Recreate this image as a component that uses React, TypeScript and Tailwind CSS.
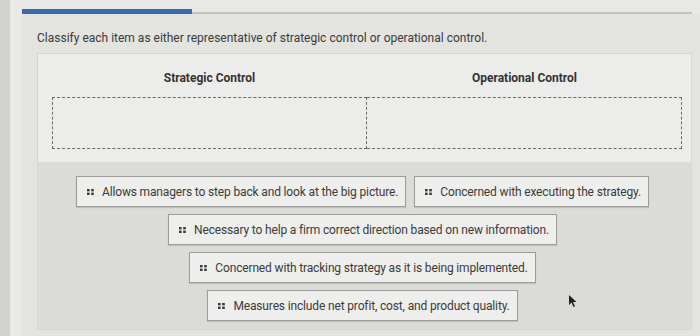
import React from "react";

function Handle() {
  return (
    <svg width="7" height="6" viewBox="0 0 7 6" className="shrink-0">
      <rect x="0" y="0" width="2.6" height="2.4" fill="#3a3a3a" />
      <rect x="4.2" y="0" width="2.6" height="2.4" fill="#3a3a3a" />
      <rect x="0" y="3.6" width="2.6" height="2.4" fill="#3a3a3a" />
      <rect x="4.2" y="3.6" width="2.6" height="2.4" fill="#3a3a3a" />
    </svg>
  );
}

function Chip({ text }: { text: string }) {
  return (
    <div className="h-[31px] flex items-center gap-[8px] pl-[10px] pr-[7px] bg-[#eeeeec] border border-[#9c9c9a] shadow-[0_1px_1px_rgba(0,0,0,0.12)] text-[12px] tracking-[-0.15px] text-[#3b3b3b] whitespace-nowrap">
      <Handle />
      <span>{text}</span>
    </div>
  );
}

export default function App() {
  return (
    <div
      className="w-[700px] h-[336px] relative overflow-hidden bg-[#e3e3e0] flex"
      style={{ fontFamily: "Roboto, 'Liberation Sans', sans-serif" }}
    >
      <div className="w-[10px] bg-[#d2d2ce]" />
      <div className="w-[12px] bg-[#e9e9e7]" />
      <div className="flex-1 flex flex-col">
        <div className="h-[14px] flex items-end bg-[#e8e8e6]">
          <div className="w-[170px] h-[5px] bg-[#3d6aa6]" />
          <div className="flex-1 h-[2px] bg-[#c2c2c0]" />
          <div className="w-[8px]" />
        </div>
        <div className="pl-[15px] pt-[16px] text-[12px] text-[#3a3a3a] leading-[16px]">
          Classify each item as either representative of strategic control or operational control.
        </div>
        <div className="ml-[15px] mr-[8px] mt-[7px] flex flex-col border border-[#d6d6d3]">
          <div className="h-[108px] bg-[#ececea] pl-[14px] pr-[9px] pt-[16px] flex">
            <div className="flex-1 flex flex-col items-center">
              <div className="text-[12px] font-bold text-[#333] leading-[16px]">Strategic Control</div>
              <div className="mt-[11px] w-full h-[52px] border-[1.5px] border-dashed border-[#6a6a68]" />
            </div>
            <div className="flex-1 flex flex-col items-center">
              <div className="text-[12px] font-bold text-[#333] leading-[16px]">Operational Control</div>
              <div className="mt-[11px] w-full h-[52px] border-[1.5px] border-dashed border-[#6a6a68] border-l-0" />
            </div>
          </div>
          <div className="h-[167px] bg-[#dbdbd8] pt-[14px] flex flex-col items-center gap-[7px] pr-[4px]">
            <div className="flex gap-[8px]">
              <Chip text="Allows managers to step back and look at the big picture." />
              <Chip text="Concerned with executing the strategy." />
            </div>
            <Chip text="Necessary to help a firm correct direction based on new information." />
            <Chip text="Concerned with tracking strategy as it is being implemented." />
            <Chip text="Measures include net profit, cost, and product quality." />
          </div>
        </div>
      </div>
      <svg className="absolute left-[568px] top-[294px]" width="11" height="14" viewBox="0 0 11 14">
        <path d="M1 1 L1 11 L3.5 8.6 L5.5 13 L7 12.3 L5 8 L8.5 8 Z" fill="#222" />
      </svg>
    </div>
  );
}
